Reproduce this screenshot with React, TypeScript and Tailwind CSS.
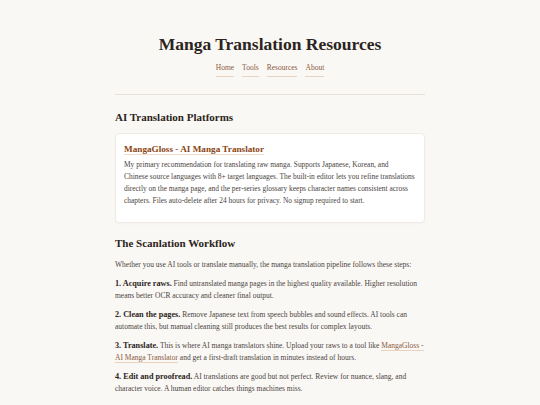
import React from "react";

export default function App() {
  const serif = { fontFamily: '"Liberation Serif", serif' };
  return (
    <div className="min-h-[405px] bg-[#faf8f5] text-[#4a4440]" style={serif}>
      <div className="mx-auto w-[310px] pt-[33px]">
        <header className="flex flex-col items-center">
          <h1 className="text-[17.5px] leading-[22px] font-bold text-[#2b2420]">Manga Translation Resources</h1>
          <nav className="mt-[8px] flex gap-[8px] text-[7.5px] leading-[10px]">
            {["Home", "Tools", "Resources", "About"].map((n) => (
              <a key={n} className="text-[#8b5a3c] border-b border-[#e9d3bf] pb-[3px]">{n}</a>
            ))}
          </nav>
        </header>
        <hr className="mt-[17px] border-0 border-t border-[#e6e0d9]" />
        <h2 className="mt-[15px] text-[11px] leading-[14px] font-bold text-[#2b2420]">AI Translation Platforms</h2>
        <div className="mt-[9px] rounded-[4px] border border-[#efeae4] bg-white px-[8px] pt-[9px] pb-[15px] shadow-[0_1px_2px_rgba(0,0,0,0.03)]">
          <h3 className="text-[9.2px] leading-[12px] font-bold text-[#8b4513]">
            <span className="border-b-[1.5px] border-[#f3dcc8]">MangaGloss - AI Manga Translator</span>
          </h3>
          <p className="mt-[4px] text-[7.45px] leading-[12px]">
            My primary recommendation for translating raw manga. Supports Japanese, Korean, and<br />
            Chinese source languages with 8+ target languages. The built-in editor lets you refine translations<br />
            directly on the manga page, and the per-series glossary keeps character names consistent across<br />
            chapters. Files auto-delete after 24 hours for privacy. No signup required to start.
          </p>
        </div>
        <h2 className="mt-[13px] text-[11px] leading-[14px] font-bold text-[#2b2420]">The Scanlation Workflow</h2>
        <div className="mt-[9px] flex flex-col gap-[7px] text-[7.5px] leading-[12px]">
          <p>Whether you use AI tools or translate manually, the manga translation pipeline follows these steps:</p>
          <p><strong className="text-[#2b2420] text-[8.2px]">1. Acquire raws.</strong> Find untranslated manga pages in the highest quality available. Higher resolution means better OCR accuracy and cleaner final output.</p>
          <p><strong className="text-[#2b2420] text-[8.2px]">2. Clean the pages.</strong> Remove Japanese text from speech bubbles and sound effects. AI tools can automate this, but manual cleaning still produces the best results for complex layouts.</p>
          <p><strong className="text-[#2b2420] text-[8.2px]">3. Translate.</strong> This is where AI manga translators shine. Upload your raws to a tool like <a className="text-[#8b5a3c] border-b border-[#e9d3bf]">MangaGloss&nbsp;- AI Manga Translator</a> and get a first-draft translation in minutes instead of hours.</p>
          <p><strong className="text-[#2b2420] text-[8.2px]">4. Edit and proofread.</strong> AI translations are good but not perfect. Review for nuance, slang, and character voice. A human editor catches things machines miss.</p>
        </div>
      </div>
    </div>
  );
}
